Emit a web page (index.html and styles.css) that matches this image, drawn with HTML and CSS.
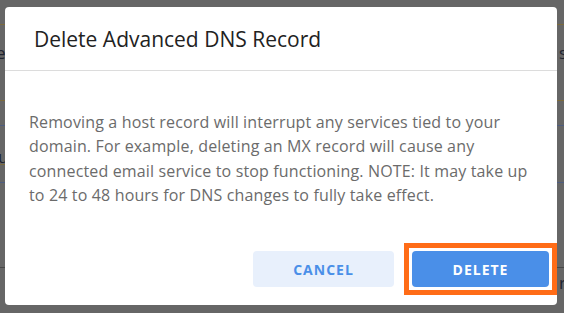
FILE: index.html
```html
<!DOCTYPE html>
<html lang="en">
<head>
<meta charset="utf-8">
<title>Delete Advanced DNS Record</title>
<link rel="stylesheet" href="styles.css">
</head>
<body>
<div class="backdrop">
  <div class="bg-row bg-top"></div>
  <div class="bg-row bg-a"><span class="frag">e</span><span class="frag">s</span></div>
  <div class="bg-row bg-b"></div>
  <div class="bg-row bg-c"><span class="frag frag-u">u:</span><span></span></div>
  <div class="bg-row bg-d"></div>
  <div class="bg-row bg-e"><span></span><span class="frag">r</span></div>
</div>
<div class="overlay">
  <div class="modal" role="dialog" aria-labelledby="modal-title">
    <div class="modal-header">
      <h2 id="modal-title" class="modal-title">Delete Advanced DNS Record</h2>
    </div>
    <div class="modal-body">
      <p class="modal-text">Removing a host record will interrupt any services tied to your domain. For example, deleting an MX record will cause any connected email service to stop functioning. NOTE: It may take up to 24 to 48 hours for DNS changes to fully take effect.</p>
    </div>
    <div class="modal-footer">
      <button class="btn btn-cancel" type="button">Cancel</button>
      <span class="highlight"><button class="btn btn-delete" type="button">Delete</button></span>
    </div>
  </div>
</div>
</body>
</html>
```
FILE: styles.css
```css
* { box-sizing: border-box; }
html, body { margin: 0; padding: 0; }
body {
  font-family: "Open Sans", "Liberation Sans", sans-serif;
  background: #666666;
  width: 564px;
  height: 313px;
  overflow: hidden;
}
.backdrop {
  display: flex;
  flex-direction: column;
}
.bg-row {
  display: flex;
  justify-content: space-between;
  align-items: center;
  color: #1e2330;
  font-size: 17px;
  line-height: 1;
}
.bg-top { height: 25px; border-bottom: 1px solid #7b6a3c; }
.bg-a { height: 76px; border-bottom: 1px solid #7b6a3c; padding: 0 0 20px 0; margin: 0 -3px 0 -4px; }
.bg-b { height: 25px; border-bottom: 1px solid #4e5d80; }
.bg-c { height: 57px; border-bottom: 1px solid #4e5d80; padding-top: 4px; margin-left: -2px; }
.bg-d { height: 85px; border-bottom: 1px solid #474747; }
.bg-e { height: 40px; align-items: flex-start; padding-top: 6px; margin-right: -2px; }
.frag-u { text-decoration: underline; text-decoration-color: #7b6a3c; }

.overlay {
  position: fixed;
  inset: 0;
  display: flex;
  align-items: flex-start;
  padding: 7px 7px 0 5px;
}
.modal {
  width: 552px;
  height: 298px;
  background: #ffffff;
  border-radius: 4px;
  display: flex;
  flex-direction: column;
}
.modal-header {
  height: 64px;
  border-bottom: 1px solid #dcdcdc;
  padding: 0 24px 0 29px;
  display: flex;
  align-items: center;
}
.modal-title {
  margin: 0;
  font-size: 21px;
  font-weight: 500;
  color: #222222;
  letter-spacing: 0;
}
.modal-body {
  padding: 39px 24px 0 24px;
  flex: 1;
}
.modal-text {
  margin: 0;
  font-size: 16px;
  letter-spacing: 0.15px;
  line-height: 24.3px;
  color: #6b6b6b;
}
.modal-footer {
  display: flex;
  justify-content: flex-end;
  align-items: center;
  padding: 0 8px 18px 0;
}
.btn {
  height: 36px;
  border: none;
  border-radius: 4px;
  font-family: "Open Sans", "Liberation Sans", sans-serif;
  font-size: 14px;
  font-weight: 700;
  letter-spacing: 1px;
  text-transform: uppercase;
  padding: 0;
}
.btn-cancel {
  width: 141px;
  background: #e8f0fc;
  color: #4a8fe8;
}
.highlight {
  display: flex;
  border: 5px solid #ff6c17;
  padding: 3px;
  margin: -8px -8px -8px 10px;
}
.btn-delete {
  width: 137px;
  background: #4a8fe8;
  color: #ffffff;
}
```
